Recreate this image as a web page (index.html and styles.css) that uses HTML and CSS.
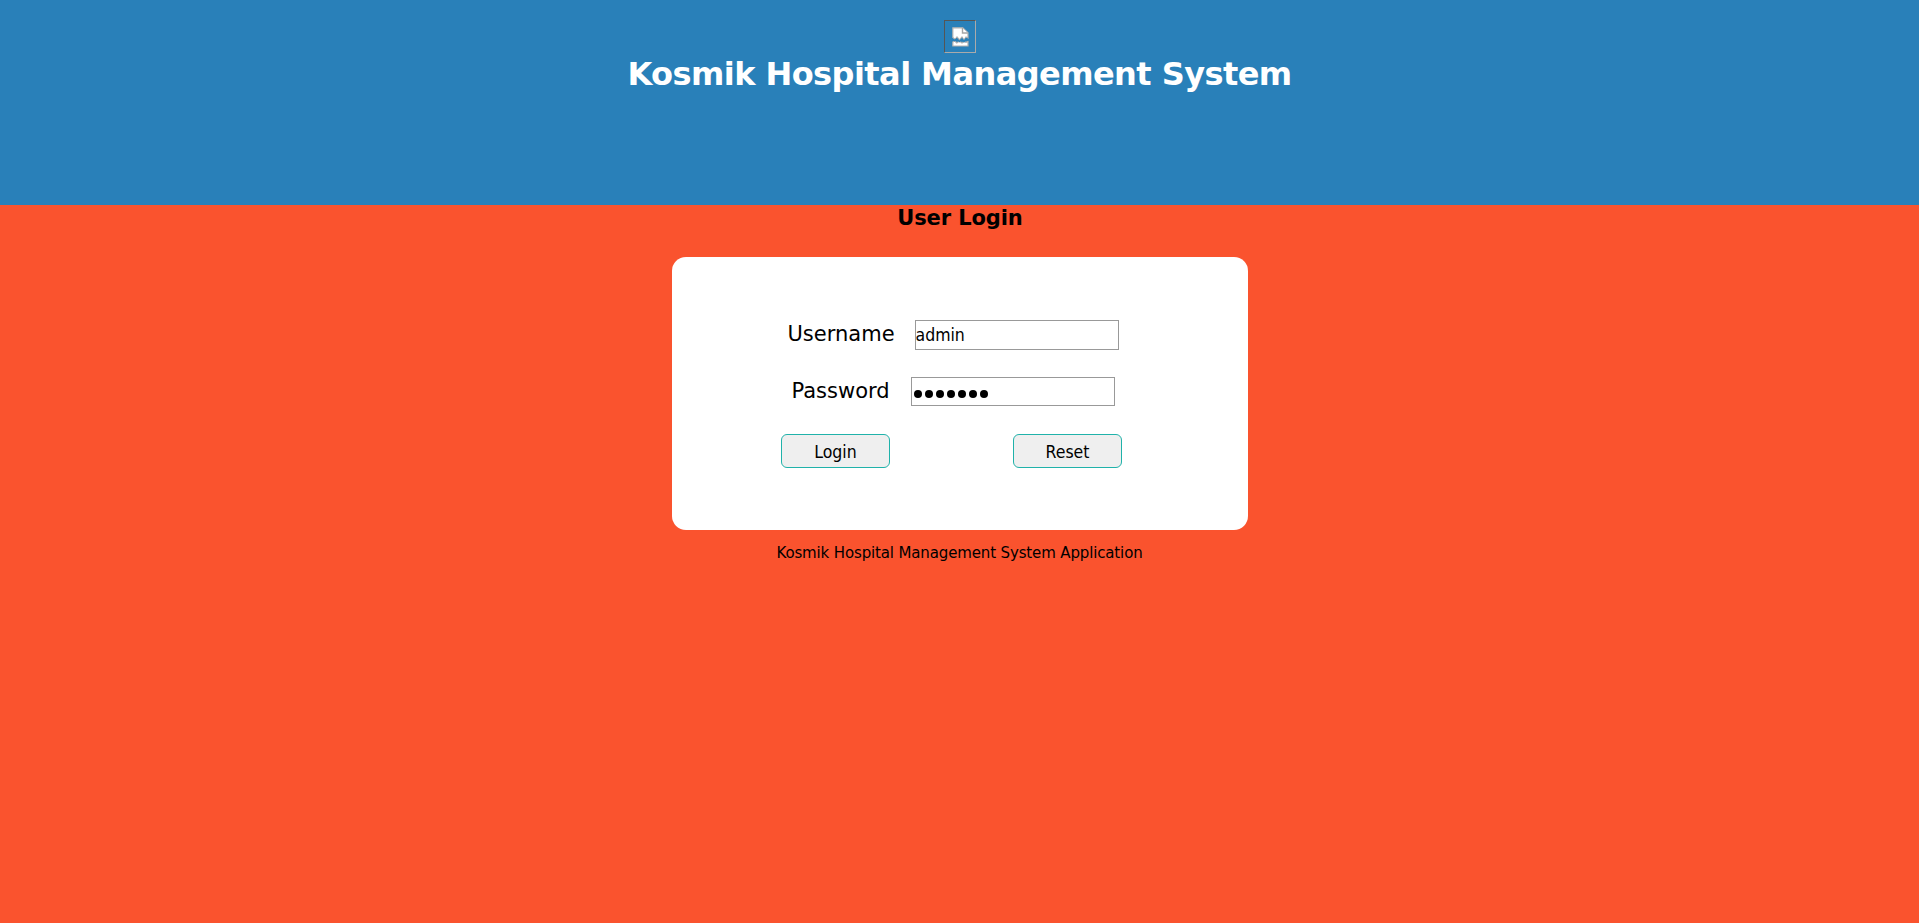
FILE: index.html
```html
<!DOCTYPE html>
<html lang="en">
<head>
<meta charset="utf-8">
<title>Kosmik Hospital Management System</title>
<link rel="stylesheet" href="styles.css">
</head>
<body>
<header class="header">
  <div class="logo">
    <svg width="17" height="20" viewBox="0 0 17 20" aria-hidden="true">
      <path d="M.8.800h10l5.200 5v5.200l-2-1-2 3-2-3-2.500 3-2.500-3-2 2.500-2.200-2z" fill="#fff" stroke="#b0b0b0" stroke-width="1.200"/>
      <path d="M10.500 1v5h5.300" fill="#fff" stroke="#a5a5a5" stroke-width="1.400"/>
      <path d="M.8 19v-4l2-1 2 2 2.700-2 2.500 2 2-1.500 2 .8 2-.8v4.500z" fill="#fff" stroke="#b0b0b0" stroke-width="1.200"/>
      <path d="M0 12l2.800 1.500 2-1.500 2.700 2.500 2.500-2.500 2 2.500 2-2.500 3 1" fill="none" stroke="#2980b9" stroke-width="1.600"/>
    </svg>
  </div>
  <h1 class="title"><span>Kosmik Hospital Management System</span></h1>
</header>
<main class="main">
  <h2 class="subtitle"><span>User Login</span></h2>
  <form class="card">
    <div class="row row-user">
      <label class="label label-user" for="user">Username</label>
      <input class="input" id="user" type="text" value="admin">
    </div>
    <div class="row row-pass">
      <label class="label label-pass" for="pass">Password</label>
      <div class="input input-pass" id="pass"><i class="dot"></i><i class="dot"></i><i class="dot"></i><i class="dot"></i><i class="dot"></i><i class="dot"></i><i class="dot"></i></div>
    </div>
    <div class="actions">
      <button class="button" type="button">Login</button>
      <button class="button" type="button">Reset</button>
    </div>
  </form>
  <p class="footer"><span>Kosmik Hospital Management System Application</span></p>
</main>
</body>
</html>
```
FILE: styles.css
```css
* { box-sizing: border-box; }
body {
  margin: 0;
  min-height: 100vh;
  background: #fa532e;
  color: #000;
  font-family: Verdana, "DejaVu Sans", sans-serif;
}
.header {
  height: 205px;
  padding-top: 20px;
  background: #2980b9;
  display: flex;
  flex-direction: column;
  align-items: center;
}
.logo {
  width: 32px;
  height: 33px;
  border: 1px solid;
  border-color: #555 #aaa #aaa #555;
  padding: 6px 0 0 7px;
}
.logo svg { display: block; }
.title {
  margin: 2px 0 0;
  color: #fff;
  font-size: 32px;
  line-height: 39px;
  letter-spacing: -0.560px;
  white-space: nowrap;
}
.main {
  display: flex;
  flex-direction: column;
  align-items: center;
}
.subtitle {
  margin: 0;
  height: 52px;
  padding-left: 1px;
  font-size: 21px;
  line-height: 27px;
  letter-spacing: -0.100px;
}
.card {
  width: 576px;
  height: 273px;
  padding-top: 63px;
  border-radius: 14px;
  background: #fff;
}
.row { display: flex; }
.row-user { padding-left: 116px; height: 57px; }
.row-pass { padding-left: 120px; height: 57px; }
.label {
  font-size: 21px;
  line-height: 29px;
  white-space: nowrap;
}
.label-user { width: 127px; }
.label-pass { width: 119px; }
.input {
  width: 204px;
  height: 30px;
  margin: 0;
  padding: 0;
  border: 1px solid #999;
  border-radius: 0;
  background: #fff;
  font: 17.500px "DejaVu Sans Condensed", "DejaVu Sans", sans-serif;
  outline: none;
}
.input-pass {
  height: 29px;
  display: flex;
  gap: 3px;
  padding: 12px 0 0 2px;
}
.dot {
  width: 8px;
  height: 8px;
  border-radius: 50%;
  background: #000;
}
.actions {
  display: flex;
  gap: 123px;
  padding-left: 109px;
}
.button {
  width: 109px;
  height: 34px;
  padding: 1px 0 0 1px;
  border: 1px solid #20b2aa;
  border-radius: 6px;
  background: #efefef;
  color: #000;
  font: 17.500px "DejaVu Sans Condensed", "DejaVu Sans", sans-serif;
}
.footer {
  margin: 13px 0 0;
  font-size: 15px;
  line-height: 20px;
  letter-spacing: -0.140px;
  white-space: nowrap;
}
```
